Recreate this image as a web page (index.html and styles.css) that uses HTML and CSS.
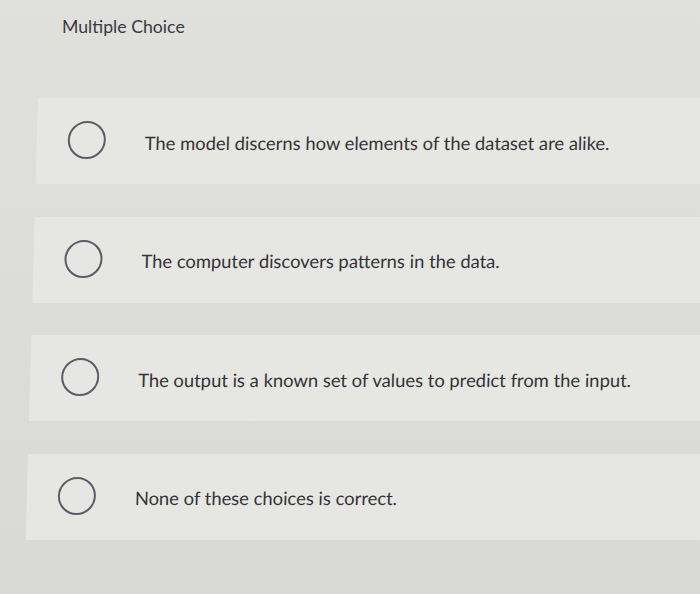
FILE: index.html
```html
<!DOCTYPE html>
<html lang="en">
<head>
<meta charset="utf-8">
<title>Multiple Choice</title>
<link rel="stylesheet" href="styles.css">
</head>
<body>
<div class="page">
  <h1 class="title">Multiple Choice</h1>
  <ul class="choices">
    <li class="choice"><span class="radio"></span><span class="label">The model discerns how elements of the dataset are alike.</span></li>
    <li class="choice"><span class="radio"></span><span class="label">The computer discovers patterns in the data.</span></li>
    <li class="choice"><span class="radio"></span><span class="label">The output is a known set of values to predict from the input.</span></li>
    <li class="choice"><span class="radio"></span><span class="label">None of these choices is correct.</span></li>
  </ul>
</div>
</body>
</html>
```
FILE: styles.css
```css
html, body {
  margin: 0;
  padding: 0;
  background: #d8d8d5;
}
.page {
  width: 700px;
  height: 594px;
  overflow: hidden;
  background: linear-gradient(180deg, #e0e0dd 0%, #dcdcd9 50%, #d9d9d6 100%);
  font-family: "Lato", "Open Sans", sans-serif;
  color: #3c3c40;
}
.title {
  margin: 0;
  padding: 16px 0 0 62px;
  font-size: 17.7px;
  font-weight: 400;
  line-height: 22px;
  color: #3a3a40;
}
.choices {
  list-style: none;
  width: 720px;
  margin: 60px 0 0 0;
  padding: 0 0 0 38px;
  display: flex;
  flex-direction: column;
  gap: 32.5px;
  transform: skewX(-1.6deg);
  transform-origin: 0 0;
}
.choice {
  display: flex;
  align-items: center;
  height: 86px;
  background: #e6e6e3;
  padding-left: 31px;
}
.radio {
  flex: none;
  width: 34px;
  height: 34px;
  border: 2px solid #5c5c68;
  border-radius: 50%;
  margin-top: -2px;
}
.label {
  margin-left: 39px;
  margin-top: 3px;
  font-size: 18.4px;
  line-height: 22px;
  color: #333337;
}
```
